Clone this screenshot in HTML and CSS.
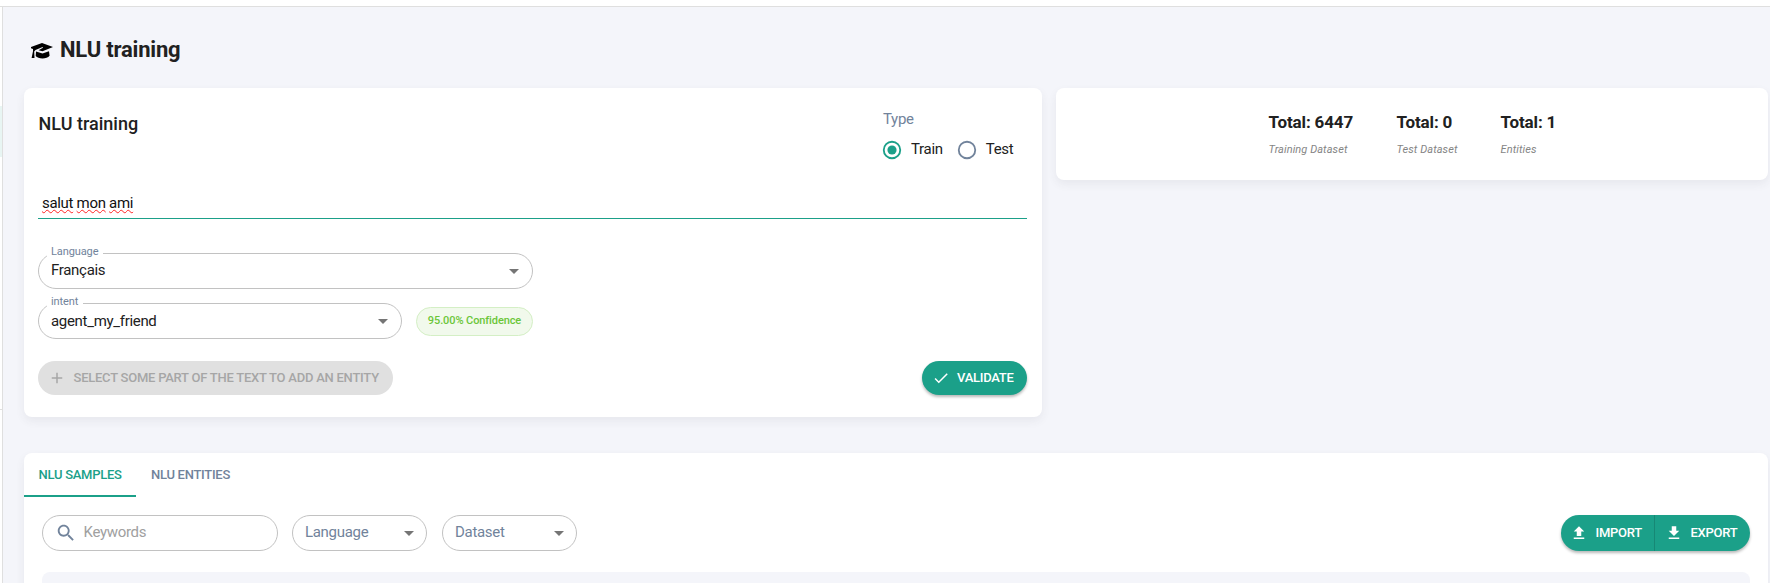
FILE: index.html
```html
<!DOCTYPE html>
<html lang="en">
<head>
<meta charset="utf-8">
<title>NLU training</title>
<link rel="stylesheet" href="styles.css">
</head>
<body>
<header class="topbar"></header>
<div class="shell">
  <nav class="sidebar"><div class="active-item"></div><div class="divider"></div></nav>
  <main class="main">
    <h1 class="page-title">
      <svg class="cap" viewBox="0 0 22 18"><path d="M0 5 11 1l11 4-10.500 4.200L7.500 8.200 12 5.800l-.4-.7L4.500 7.900 3.200 9.600 3.500 16H.600L2 9.200V7L0 6.200z"/><path d="M5 9.500l6.500 2.100L18 9.200l.6 4.600C17 15.500 14.500 16.500 11.500 16.500S6 15.600 4.700 14z"/></svg>
      <span>NLU training</span>
    </h1>
    <div class="row">
      <section class="card trainer">
        <div class="head">
          <h2>NLU training</h2>
          <div class="type">
            <div class="type-label">Type</div>
            <div class="radios">
              <svg class="radio on" viewBox="0 0 24 24"><circle cx="12" cy="12" r="9"/><circle class="dot" cx="12" cy="12" r="5"/></svg>
              <span class="train">Train</span>
              <svg class="radio" viewBox="0 0 24 24"><circle cx="12" cy="12" r="9"/></svg>
              <span>Test</span>
            </div>
          </div>
        </div>
        <div class="sentence"><span>salut</span> <span>mon</span> <span>ami</span></div>
        <div class="fields">
          <fieldset class="select"><legend>Language</legend><div class="value">Français<i class="arrow"></i></div></fieldset>
          <div class="intent-row">
            <fieldset class="select"><legend>intent</legend><div class="value intent">agent_my_friend<i class="arrow"></i></div></fieldset>
            <span class="chip">95.00% Confidence</span>
          </div>
        </div>
        <div class="actions">
          <button class="btn disabled"><svg viewBox="0 0 24 24"><path d="M19 13h-6v6h-2v-6H5v-2h6V5h2v6h6v2z"/></svg><span>Select some part of the text to add an entity</span></button>
          <button class="btn primary"><svg viewBox="0 0 24 24"><path d="M9 16.17 4.83 12l-1.42 1.41L9 19 21 7l-1.41-1.41z"/></svg><span>Validate</span></button>
        </div>
      </section>
      <section class="card stats">
        <div class="stat s1"><b>Total: 6447</b><em>Training Dataset</em></div>
        <div class="stat s2"><b>Total: 0</b><em>Test Dataset</em></div>
        <div class="stat s3"><b>Total: 1</b><em>Entities</em></div>
      </section>
    </div>
    <section class="card samples">
      <div class="tabs"><div class="tab active">NLU Samples</div><div class="tab">NLU Entities</div></div>
      <div class="filters">
        <div class="pill search"><svg viewBox="0 0 24 24"><path d="M15.5 14h-.79l-.28-.27C15.41 12.59 16 11.11 16 9.5 16 5.91 13.09 3 9.5 3S3 5.91 3 9.5 5.91 16 9.5 16c1.61 0 3.09-.59 4.23-1.57l.27.28v.79l5 4.99L20.49 19l-4.99-5zm-6 0C7.01 14 5 11.99 5 9.5S7.01 5 9.5 5 14 7.01 14 9.5 11.99 14 9.5 14z"/></svg><span>Keywords</span></div>
        <div class="pill drop">Language<i class="arrow"></i></div>
        <div class="pill drop">Dataset<i class="arrow"></i></div>
        <div class="group">
          <button class="import"><svg viewBox="0 0 24 24"><path d="M9 16h6v-6h4l-7-7-7 7h4zm-4 2h14v2H5z"/></svg><span>Import</span></button>
          <button class="export"><svg viewBox="0 0 24 24"><path d="M19 9h-4V3H9v6H5l7 7 7-7zM5 18v2h14v-2H5z"/></svg><span>Export</span></button>
        </div>
      </div>
      <div class="table"></div>
    </section>
  </main>
</div>
</body>
</html>
```

FILE: styles.css
```css
* { box-sizing: border-box; }
body { margin: 0; height: 583px; overflow: hidden; display: flex; flex-direction: column; background: #fff; color: #212121; font-family: Roboto, sans-serif; font-size: 15px; letter-spacing: -.31px; }
h1, h2 { margin: 0; }
.topbar { height: 7px; flex: none; border-bottom: 1px solid #dfdfdf; background: #fff; }
.shell { display: flex; flex: 1; min-height: 0; }
.sidebar { width: 3px; border-right: 1px solid #dfdfdf; padding-top: 99px; }
.active-item { height: 51px; background: #e8f5f3; }
.divider { margin-top: 252px; height: 1px; background: #dfdfdf; }
.main { flex: 1; min-width: 0; background: #f4f5fa; padding: 0 2px 0 21px; overflow: hidden; }
.page-title { height: 81px; padding: 5px 0 0 7px; display: flex; align-items: center; gap: 7px; font-size: 22px; font-weight: 700; line-height: 26px; letter-spacing: -.2px; }
.cap { width: 22px; height: 18px; fill: #000; margin-top: 1px; }
.row { display: flex; align-items: flex-start; gap: 14px; }
.card { background: #fff; border-radius: 8px; box-shadow: 0 4px 10px rgba(58, 53, 65, .07); }
.trainer { width: 1018px; height: 329px; padding: 0 15px 0 14px; }
.head { display: flex; justify-content: space-between; height: 91px; }
h2 { font-size: 18px; font-weight: 500; line-height: 24px; padding: 24px 0 0 .6px; letter-spacing: 0; }
.type { width: 146px; padding: 21px 0 0 2px; }
.type-label { line-height: 20px; color: #71839b; }
.radios { display: flex; align-items: center; height: 22px; margin: 10px 0 0 -2px; line-height: 18px; }
.radio { width: 22px; height: 22px; fill: none; stroke: #71839b; stroke-width: 2; }
.radio.on { stroke: #1ba089; }
.dot { fill: #1ba089; stroke: none; }
.radios span { padding: 0 0 2px 8px; }
.radios .train { margin-right: 13px; }
.sentence { height: 40px; padding: 14px 4px 0; line-height: 20px; border-bottom: 1px solid #1ba089; color: #111; }
.sentence span { text-decoration: underline wavy #ff2424 1px; text-underline-offset: 1px; text-decoration-skip-ink: none; }
.fields { width: 495px; padding-top: 28px; }
.select { position: relative; margin: 0; min-width: 0; height: 42px; padding: 0; border: 1px solid #c2c2c2; border-radius: 18px; }
.select legend { margin-left: 8px; padding: 0 5px 0 4px; height: 12px; line-height: 10px; font-size: 11px; letter-spacing: -.1px; color: #71839b; }
.value { display: flex; justify-content: space-between; align-items: center; padding: 0 13px 0 12px; height: 22px; }
.intent { padding-top: 2px; }
.arrow { border: 5px solid transparent; border-top-color: #757575; border-bottom: 0; }
.value .arrow { margin-top: 2px; }
.intent .arrow { margin-top: 0; }
.intent-row { display: flex; align-items: flex-start; justify-content: space-between; margin-top: 8px; }
.intent-row .select { width: 364px; }
.chip { width: 117px; height: 29px; margin-top: 10px; border: 1px solid #d4efc5; border-radius: 15px; background: #f1f9ec; color: #6bc639; font-size: 11px; font-weight: 500; line-height: 25px; letter-spacing: -.1px; text-align: center; }
.actions { display: flex; justify-content: space-between; margin-top: 22px; }
button { border: 0; margin: 0; font-family: inherit; font-size: 13px; font-weight: 500; text-transform: uppercase; letter-spacing: -.26px; display: flex; align-items: center; padding: 0; white-space: nowrap; }
button svg { fill: currentColor; }
button span { padding-bottom: 2px; }
.btn { height: 34px; border-radius: 17px; }
.btn svg { width: 18px; height: 18px; margin-right: 7px; }
.disabled { width: 355px; padding-left: 10px; letter-spacing: -.24px; background: #e0e0e0; color: #a6a6a6; }
.disabled span { padding-left: .5px; }
.primary { width: 105px; padding-left: 10px; background: #1ba089; color: #fff; box-shadow: 0 2px 3px rgba(0, 0, 0, .28); }
.stats { flex: 1; height: 92px; display: flex; padding: 23px 0 0 212.6px; }
.stat { display: flex; flex-direction: column; white-space: nowrap; }
.stat b { font-size: 17px; line-height: 22px; letter-spacing: -.15px; }
.stat em { font-size: 11px; line-height: 16px; margin-top: 9px; letter-spacing: .08px; color: #858585; }
.s1 { width: 128px; }
.s2 { width: 104px; }
.samples { margin-top: 36px; height: 160px; }
.tabs { display: flex; height: 44px; }
.tab { padding: 13px 14px 0 15px; height: 44px; font-size: 13px; font-weight: 500; line-height: 17px; letter-spacing: -.28px; text-transform: uppercase; white-space: nowrap; color: #71839b; }
.tab.active { width: 112px; padding-left: 14.6px; color: #1ba089; border-bottom: 2px solid #1ba089; }
.filters { display: flex; padding: 18px 18px 0; }
.pill { height: 36px; border: 1px solid #c2c2c2; border-radius: 18px; display: flex; align-items: center; padding-bottom: 2px; color: #71839b; }
.search { width: 236px; padding-left: 12px; margin-right: 14px; color: #a0a0a0; }
.search svg { width: 22px; height: 22px; margin: 2px 6.5px 0 0; fill: #71839b; }
.drop { width: 135px; margin-right: 15px; padding-left: 12px; padding-right: 12px; justify-content: space-between; }
.drop .arrow { margin-top: 2px; }
.group { display: flex; margin-left: auto; width: 189px; height: 36px; border-radius: 18px; background: #1ba089; box-shadow: 0 2px 3px rgba(0, 0, 0, .28); }
.group button { height: 36px; background: none; color: #fff; }
.group svg { width: 18px; height: 18px; margin-right: 7.5px; }
.import { width: 94px; padding-left: 9px; border-right: 1px solid #178875; }
.export { padding-left: 10px; }
.table { margin: 21px 18px 0; height: 40px; border-radius: 8px; background: #f4f5fa; }
```
